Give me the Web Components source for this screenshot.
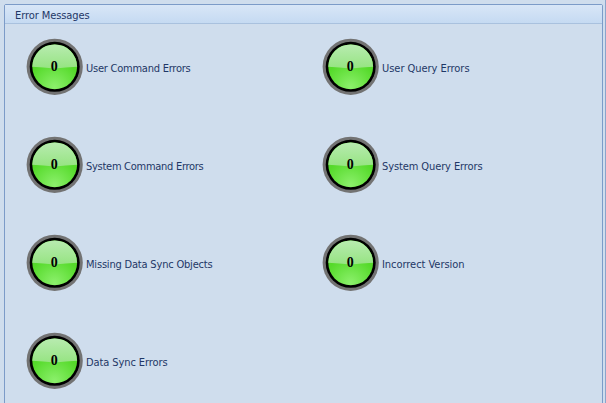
<!DOCTYPE html>
<html lang="en">
<head>
<meta charset="utf-8">
<title>Error Messages</title>
<style>
html,body{margin:0;height:100%;overflow:hidden;background:#cfdded}
body{font-family:"DejaVu Sans Condensed","DejaVu Sans",sans-serif;font-size:11px;color:#1e3766}
</style>
</head>
<body>
<group-panel>
  <fit-label slot="caption" width="74.5">Error Messages</fit-label>
  <status-item value="0" width="104.5">User Command Errors</status-item>
  <status-item value="0" width="87.5">User Query Errors</status-item>
  <status-item value="0" width="117.5">System Command Errors</status-item>
  <status-item value="0" width="100.5">System Query Errors</status-item>
  <status-item value="0" width="126.5">Missing Data Sync Objects</status-item>
  <status-item value="0" width="82.5">Incorrect Version</status-item>
  <status-item value="0" width="81.5">Data Sync Errors</status-item>
</group-panel>
<script>
class FitLabel extends HTMLElement {
  connectedCallback() {
    if (this.shadowRoot) return;
    this.attachShadow({mode:'open'}).innerHTML = `
      <style>:host{display:block;line-height:14px;font-family:"DejaVu Sans Condensed","DejaVu Sans",sans-serif;font-stretch:condensed;font-size:11px;white-space:nowrap}</style><span></span>`;
    const span = this.shadowRoot.querySelector('span');
    span.textContent = this.textContent.trim();
    const want = Number(this.getAttribute('width'));
    const have = span.getBoundingClientRect().width;
    if (have) span.style.letterSpacing = (want - have) / span.textContent.length + 'px';
  }
}
class GaugeDial extends HTMLElement {
  connectedCallback() {
    if (this.shadowRoot) return;
    this.attachShadow({mode:'open'}).innerHTML = `
      <style>:host{display:block;width:57px;height:57px;flex:none}svg{display:block}
      text{font:bold 14px "Liberation Serif",serif;fill:#000}</style>
      <svg width="57" height="57" viewBox="0 0 57 57">
        <defs>
          <radialGradient id="g" gradientUnits="userSpaceOnUse" cx="28.5" cy="49" r="26">
            <stop offset="0" stop-color="#8cf06c"/><stop offset="1" stop-color="#55da2a"/>
          </radialGradient>
          <linearGradient id="s" x1="0" y1="0" x2="0" y2="1">
            <stop offset="0" stop-color="#b8ebb0"/><stop offset="1" stop-color="#96e482"/>
          </linearGradient>
        </defs>
        <circle cx="28.7" cy="28.8" r="28.1" fill="#737373"/>
        <circle cx="28.7" cy="28.8" r="25" fill="#000"/>
        <circle cx="28.7" cy="28.8" r="22.4" fill="url(#g)"/>
        <path d="M6.3 28.8a22.4 22.4 0 0 1 44.8 0Q40 29.3 28.7 30.5Q17 29.3 6.3 28.8z" fill="url(#s)"/>
        <text x="28.3" y="33" text-anchor="middle"></text>
      </svg>`;
    this.shadowRoot.querySelector('text').textContent = this.getAttribute('value');
  }
}
class StatusItem extends HTMLElement {
  connectedCallback() {
    if (this.shadowRoot) return;
    this.attachShadow({mode:'open'}).innerHTML = `
      <style>:host{display:flex;align-items:center;gap:3px;height:57px}fit-label{padding-top:5px}</style>
      <gauge-dial value="${this.getAttribute('value')}"></gauge-dial>
      <fit-label width="${this.getAttribute('width')}">${this.textContent}</fit-label>`;
  }
}
class GroupPanel extends HTMLElement {
  connectedCallback() {
    if (this.shadowRoot) return;
    this.attachShadow({mode:'open'}).innerHTML = `
      <style>
      :host{display:block;box-sizing:border-box;height:403px;padding:4px 2px 0 4px;border-right:1px solid #8ba5cb;overflow:hidden}
      section{box-sizing:border-box;height:410px;border:1px solid #7c9bc8;border-radius:2px}
      header{box-sizing:border-box;height:19px;padding:4px 0 0 10px;border-bottom:1px solid #a9c1de;background:linear-gradient(#d8e6f7,#c5daf2)}
      main{display:grid;grid-template-columns:296px 1fr;grid-auto-rows:57px;row-gap:41px;padding:14px 0 0 21px}
      </style>
      <section><header><slot name="caption"></slot></header><main><slot></slot></main></section>`;
  }
}
customElements.define('fit-label', FitLabel);
customElements.define('gauge-dial', GaugeDial);
customElements.define('status-item', StatusItem);
customElements.define('group-panel', GroupPanel);
</script>
</body>
</html>
